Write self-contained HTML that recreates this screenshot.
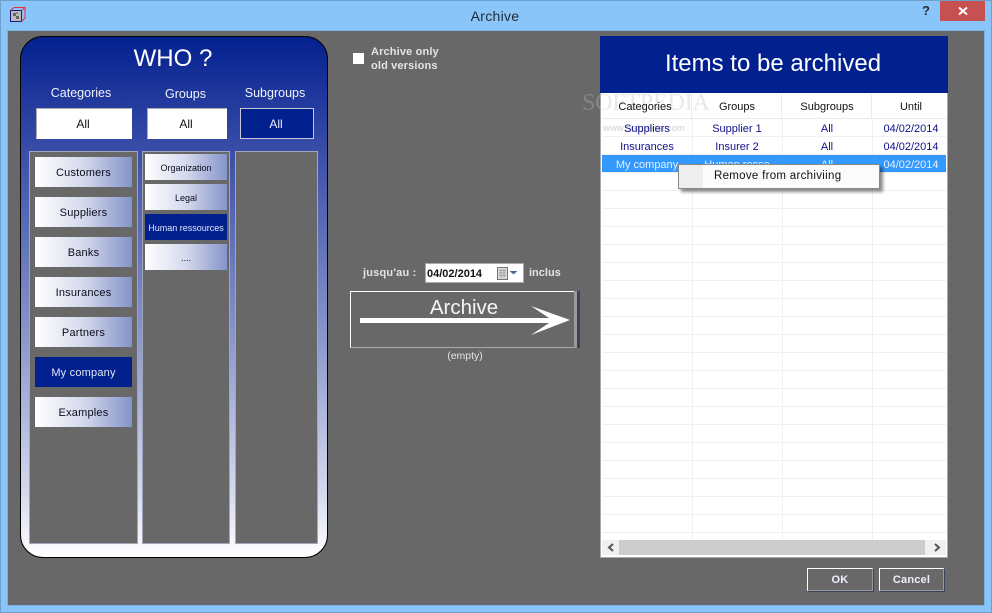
<!DOCTYPE html>
<html><head><meta charset="utf-8"><style>
html,body{margin:0;padding:0;width:992px;height:613px;overflow:hidden;background:#8ac5fa}
*{box-sizing:border-box}
body{font-family:"Liberation Sans",sans-serif;position:relative}
.a{position:absolute}
.t{position:absolute;text-align:center;white-space:nowrap}
.b{position:absolute;display:flex;align-items:center;justify-content:center;padding-top:2px;color:#0c0c1c;font-size:11px;letter-spacing:.2px;background:linear-gradient(90deg,#fff 0%,#d5d9ec 50%,#8594c9 100%)}
.s{background:#03208f;color:#dfe6fa}
.all{position:absolute;top:108px;height:31px;background:#fff;display:flex;align-items:center;justify-content:center;padding-right:2px;font-size:12px;color:#111;border:1px solid #aaa;border-bottom-color:#fff;border-right-color:#fff}
.box{position:absolute;top:151px;height:393px;background:#686868;border:1px solid #a3a6b8}
.h{position:absolute;top:94px;height:24px;line-height:27px;text-align:center;font-size:11px;color:#111}
.r{position:absolute;height:18px;line-height:20px;text-align:center;font-size:11px;color:#10108a}
.hl{position:absolute;left:602px;width:344px;height:1px;background:#f0f0f0}
.vl{position:absolute;width:1px;top:119px;height:421px;background:#f0f1f4}
</style></head><body>
<div class="a" style="left:0;top:0;width:992px;height:613px;border:1px solid #6f9fcb"></div>
<div class="a" style="left:7px;top:30px;width:978px;height:576px;background:#686868;border:1px solid #79b0e2"></div>
<!-- title -->
<svg class="a" style="left:9px;top:6px" width="18" height="18" viewBox="0 0 18 18"><rect x="1.500" y="4.500" width="11" height="11" fill="#bbb" stroke="#1a1a8c"/><path d="M1.500 4.500L5 1.500H16V12L12.500 15.500M12.500 4.500L16 1.500" fill="none" stroke="#e8303a"/><rect x="4" y="7" width="3" height="3" fill="#666"/><rect x="7" y="10" width="3" height="3" fill="#666"/><rect x="7" y="6" width="2" height="2" fill="#888"/></svg>
<div class="t" style="left:0;width:990px;top:8px;font-size:14px;letter-spacing:.3px;color:#1e2a36">Archive</div>
<div class="t" style="left:920px;top:3px;font-size:13px;font-weight:bold;color:#262b33;width:12px">?</div>
<div class="a" style="left:940px;top:1px;width:45px;height:20px;background:#c75050"></div>
<svg class="a" style="left:957px;top:6px" width="12" height="10" viewBox="0 0 12 10"><path d="M2 1.500L10 8.500M10 1.500L2 8.500" stroke="#fff" stroke-width="2"/></svg>

<!-- WHO panel -->
<div class="a" style="left:20px;top:36px;width:308px;height:522px;border:1px solid #000;border-radius:23px;background:linear-gradient(180deg,#03208f 0%,#3a4ea8 22%,#8a97cc 58%,#d6daee 88%,#fff 100%)"></div>
<div class="t" style="left:20px;width:306px;top:45px;font-size:24px;color:#fff">WHO ?</div>
<div class="t" style="left:36px;width:90px;top:86px;font-size:12.500px;color:#f0f2fa">Categories</div>
<div class="t" style="left:147px;width:77px;top:87px;font-size:12.500px;color:#f0f2fa">Groups</div>
<div class="t" style="left:240px;width:70px;top:86px;font-size:12.500px;color:#f0f2fa">Subgroups</div>
<div class="all" style="left:36px;width:96px">All</div>
<div class="all" style="left:147px;width:80px">All</div>
<div class="all" style="left:240px;width:74px;background:#03208f;color:#e8ecfa;border:1px solid #c5c8d8">All</div>
<div class="box" style="left:29px;width:109px"></div>
<div class="box" style="left:142px;width:88px"></div>
<div class="box" style="left:235px;width:83px"></div>

<div class="b" style="left:35px;top:157px;width:97px;height:30px">Customers</div>
<div class="b" style="left:35px;top:197px;width:97px;height:30px">Suppliers</div>
<div class="b" style="left:35px;top:237px;width:97px;height:30px">Banks</div>
<div class="b" style="left:35px;top:277px;width:97px;height:30px">Insurances</div>
<div class="b" style="left:35px;top:317px;width:97px;height:30px">Partners</div>
<div class="b s" style="left:35px;top:357px;width:97px;height:30px;background:#03208f">My company</div>
<div class="b" style="left:35px;top:397px;width:97px;height:30px">Examples</div>

<div class="b" style="left:145px;top:154px;width:82px;height:26px;font-size:9px;letter-spacing:0">Organization</div>
<div class="b" style="left:145px;top:184px;width:82px;height:26px;font-size:9px;letter-spacing:0">Legal</div>
<div class="b s" style="left:145px;top:214px;width:82px;height:26px;font-size:9px;letter-spacing:0;background:#03208f">Human ressources</div>
<div class="b" style="left:145px;top:244px;width:82px;height:26px;font-size:9px;letter-spacing:0">....</div>

<!-- middle -->
<div class="a" style="left:353px;top:53px;width:11px;height:11px;background:#fff"></div>
<div class="a" style="left:371px;top:45px;font-size:11px;line-height:14px;font-weight:bold;letter-spacing:.15px;color:#e4e4e4">Archive only<br>old versions</div>
<div class="a" style="left:363px;top:267px;font-size:11px;font-weight:bold;color:#e4e4e4;letter-spacing:.2px">jusqu'au :</div>
<div class="a" style="left:425px;top:263px;width:99px;height:20px;background:#fff;border:1px solid #aaa"></div>
<div class="a" style="left:427px;top:268px;font-size:11px;font-weight:bold;color:#111">04/02/2014</div>
<svg class="a" style="left:496px;top:266px" width="28" height="14" viewBox="0 0 28 14"><rect x="1.500" y="1.500" width="10" height="12" fill="#d8dade" stroke="#777"/><path d="M3 4.500H10M3 7H10M3 9.500H10M5 3V12M8 3V12" stroke="#999" stroke-width=".7"/><path d="M13.500 5H21.500L17.500 8.500Z" fill="#4a6a90"/></svg>
<div class="a" style="left:529px;top:267px;font-size:11px;font-weight:bold;color:#e4e4e4">inclus</div>

<div class="a" style="left:350px;top:291px;width:224px;height:57px;border:1px solid #fff;border-right:none;border-bottom-color:#aaa"></div>
<div class="a" style="left:574px;top:291px;width:3px;height:57px;background:#999"></div>
<div class="a" style="left:577px;top:291px;width:3px;height:57px;background:#39435a"></div>
<div class="t" style="left:350px;width:228px;top:296px;font-size:20.500px;color:#f4f4f4">Archive</div>
<svg class="a" style="left:350px;top:300px" width="225" height="40" viewBox="0 0 225 40"><path d="M10 18H199L181 6L220 20L181 35L199 23H10Z" fill="#fff"/></svg>
<div class="t" style="left:350px;width:230px;top:350px;font-size:10.500px;color:#e4e4e4">(empty)</div>

<!-- table panel -->
<div class="a" style="left:600px;top:93px;width:348px;height:465px;background:#fff;border:1px solid #a8a8b0;border-top:none"></div>
<div class="a" style="left:600px;top:36px;width:348px;height:57px;background:#03208f"></div>
<div class="t" style="left:600px;top:50px;width:346px;font-size:24px;color:#fff">Items to be archived</div>

<!-- watermark -->
<div class="t" style="left:582px;top:90px;font-family:'Liberation Serif',serif;font-size:24px;color:rgba(190,190,190,.35);letter-spacing:-.2px">SOFTPEDIA</div>
<div class="t" style="left:603px;top:123px;font-size:9.500px;color:rgba(170,170,170,.55)">www.softpedia.com</div>

<div class="a" style="left:602px;top:118px;width:344px;height:1px;background:#e4ebf5"></div>
<div class="a" style="left:691px;top:94px;width:1px;height:24px;background:#e4ebf5"></div>
<div class="a" style="left:781px;top:94px;width:1px;height:24px;background:#e4ebf5"></div>
<div class="a" style="left:871px;top:94px;width:1px;height:24px;background:#e4ebf5"></div>
<div class="h" style="left:602px;width:86px">Categories</div>
<div class="h" style="left:692px;width:90px">Groups</div>
<div class="h" style="left:782px;width:90px">Subgroups</div>
<div class="h" style="left:872px;width:78px">Until</div>

<div class="vl" style="left:692px"></div><div class="vl" style="left:782px"></div><div class="vl" style="left:872px"></div>
<div class="hl" style="top:136px"></div><div class="hl" style="top:154px"></div><div class="hl" style="top:172px"></div><div class="hl" style="top:190px"></div><div class="hl" style="top:208px"></div><div class="hl" style="top:226px"></div><div class="hl" style="top:244px"></div><div class="hl" style="top:262px"></div><div class="hl" style="top:280px"></div><div class="hl" style="top:298px"></div><div class="hl" style="top:316px"></div><div class="hl" style="top:334px"></div><div class="hl" style="top:352px"></div><div class="hl" style="top:370px"></div><div class="hl" style="top:388px"></div><div class="hl" style="top:406px"></div><div class="hl" style="top:424px"></div><div class="hl" style="top:442px"></div><div class="hl" style="top:460px"></div><div class="hl" style="top:478px"></div><div class="hl" style="top:496px"></div><div class="hl" style="top:514px"></div><div class="hl" style="top:532px"></div>

<div class="r" style="left:602px;top:119px;width:90px">Suppliers</div>
<div class="r" style="left:692px;top:119px;width:90px">Supplier 1</div>
<div class="r" style="left:782px;top:119px;width:90px">All</div>
<div class="r" style="left:872px;top:119px;width:78px">04/02/2014</div>
<div class="r" style="left:602px;top:137px;width:90px">Insurances</div>
<div class="r" style="left:692px;top:137px;width:90px">Insurer 2</div>
<div class="r" style="left:782px;top:137px;width:90px">All</div>
<div class="r" style="left:872px;top:137px;width:78px">04/02/2014</div>
<div class="a" style="left:602px;top:155px;width:344px;height:17px;background:#3399ff"></div>
<div class="r" style="left:602px;top:155px;width:90px;color:#e6f0ff">My company</div>
<div class="r" style="left:692px;top:155px;width:90px;color:#e6f0ff">Human resso</div>
<div class="r" style="left:782px;top:155px;width:90px;color:#e6f0ff">All</div>
<div class="r" style="left:872px;top:155px;width:78px;color:#e6f0ff">04/02/2014</div>

<!-- context menu -->
<div class="a" style="left:678px;top:164px;width:202px;height:25px;background:#fbfbfb;border:1px solid #888;box-shadow:3px 3px 3px rgba(0,0,0,.45)"></div>
<div class="a" style="left:679px;top:165px;width:24px;height:23px;background:#eeeeee"></div>
<div class="a" style="left:714px;top:170px;font-size:11.500px;letter-spacing:.3px;color:#111">Remove from archiviing</div>

<!-- scrollbar -->
<div class="a" style="left:602px;top:540px;width:344px;height:15px;background:#f0f0f0"></div>
<div class="a" style="left:619px;top:540px;width:306px;height:15px;background:#cdcdcd"></div>
<svg class="a" style="left:602px;top:540px" width="344" height="15" viewBox="0 0 344 15"><path d="M11 4L7 7.500L11 11" fill="none" stroke="#555" stroke-width="2"/><path d="M333 4L337 7.500L333 11" fill="none" stroke="#555" stroke-width="2"/></svg>

<!-- buttons -->
<div class="a" style="left:807px;top:568px;width:66px;height:23px;border:1px solid #fff;border-right-color:#999;border-bottom-color:#999;box-shadow:1px 1px 0 #39435a;color:#eef;font-size:11px;font-weight:bold;text-align:center;line-height:22px;letter-spacing:.2px">OK</div>
<div class="a" style="left:879px;top:568px;width:65px;height:23px;border:1px solid #fff;border-right-color:#999;border-bottom-color:#999;box-shadow:1px 1px 0 #39435a;color:#eef;font-size:11px;font-weight:bold;text-align:center;line-height:22px;letter-spacing:.2px">Cancel</div>
</body></html>
